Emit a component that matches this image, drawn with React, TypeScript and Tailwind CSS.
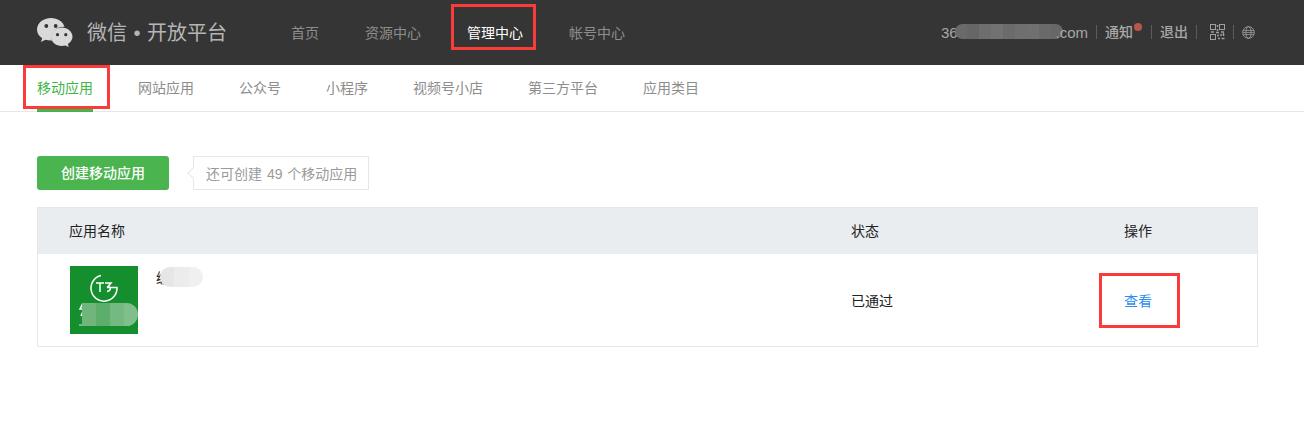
const navItems = [
  { label: '首页', active: false },
  { label: '资源中心', active: false },
  { label: '管理中心', active: true },
  { label: '帐号中心', active: false },
];

const subNavItems = ['移动应用', '网站应用', '公众号', '小程序', '视频号小店', '第三方平台', '应用类目'];

const emailBlur = ['#6a6a6a', '#666666', '#6e6e6e', '#727272', '#6b6b6b', '#6f6f6f', '#707070', '#6a6a6a', '#676767'];
const nameBlur = ['#e6e6e6', '#ececec', '#f0f0f0'];
const iconBlur = ['#6fb57c', '#5dad6b', '#74b981', '#80bf8c'];

function Logo() {
  return (
    <svg width="36" height="29" viewBox="0 0 36 29" className="block">
      <path d="M14 0C6.3 0 0 5.1 0 11.5c0 3.6 2 6.6 5.2 8.7L3.9 24l4.6-2.3c1.7.5 3.5.8 5.500.8h1c-.4-1-.6-2.200-.6-3.300 0-5.800 5.400-10.400 12.200-10.400h.9C26.200 3.500 20.600 0 14 0z" fill="#d9d9d9" />
      <path d="M35.500 18.800c0-5-5-9.200-10.700-9.200-6 0-10.800 4.200-10.800 9.200 0 5.100 4.800 9.200 10.800 9.200 1.300 0 2.500-.2 3.600-.5l3.300 1.500-.8-3c2.800-1.800 4.600-4.300 4.600-7.200z" fill="#d9d9d9" />
      <circle cx="9.300" cy="8" r="1.900" fill="#353535" />
      <circle cx="18.700" cy="8" r="1.900" fill="#353535" />
      <circle cx="20.500" cy="16.700" r="1.600" fill="#353535" />
      <circle cx="28.800" cy="16.700" r="1.600" fill="#353535" />
    </svg>
  );
}

function QrIcon() {
  return (
    <svg width="15" height="16" viewBox="0 0 15 16" fill="none" stroke="#a0a0a0" className="block">
      <rect x="0.500" y="0.500" width="5" height="5" />
      <rect x="9.500" y="0.500" width="5" height="5" />
      <rect x="0.500" y="10.500" width="5" height="5" />
      <path d="M7.500 1v2M7.500 5v2M1 8h3M6 8.500h3M11 8h3M13.500 9v3M8 10.500v2M10 11h2M8 14.500h2M11.500 14.500h3" strokeWidth="1.500" />
    </svg>
  );
}

function GlobeIcon() {
  return (
    <svg width="13" height="13" viewBox="0 0 13 13" fill="none" stroke="#969696" className="block">
      <circle cx="6.500" cy="6.500" r="5.800" />
      <ellipse cx="6.500" cy="6.500" rx="2.600" ry="5.800" />
      <path d="M1 4.500h11M1 8.500h11M.8 6.500h11.400" strokeWidth="0.800" />
    </svg>
  );
}

function AppIcon() {
  return (
    <div className="relative w-[68px] h-[68px] bg-[#158f2d] overflow-hidden">
      <svg width="68" height="68" viewBox="0 0 68 68" fill="none" stroke="#ffffff" className="block">
        <path d="M31 9.500A13 13 0 1 0 47 21.500H37" strokeWidth="1.500" />
        <path d="M26 17h8M30 17v9M35 17h6l-3 3.500c3 0 3.500 4.500-1 5" strokeWidth="1.500" />
        <path d="M9 59h51" stroke="#8fcb9a" strokeWidth="1.500" />
        <path d="M13 37l-3 6h4l-3 7" strokeWidth="1.500" />
      </svg>
      <div className="absolute left-[12px] top-[37px] flex h-[23px] overflow-hidden rounded-r-full rounded-l-lg">
        {iconBlur.map((color, i) => (
          <div key={i} className="w-[14px]" style={{ backgroundColor: color }} />
        ))}
      </div>
    </div>
  );
}

function Sep() {
  return <span className="block w-px h-[14px] bg-[#5c5c5c]" />;
}

export default function App() {
  return (
    <div className="w-[1304px] h-[436px] bg-white overflow-hidden font-['Liberation_Sans','Noto_Sans_CJK_SC',sans-serif] text-sm">
      <header className="h-[65px] bg-[#353535] flex items-center pl-[37px]">
        <Logo />
        <h1 className="ml-[14px] w-[204px] text-xl leading-[28px] text-[#b5b5b5] whitespace-nowrap">
          微信<span className="inline-block w-5 text-center">•</span>开放平台
        </h1>
        <nav className="flex gap-[46px] whitespace-nowrap">
          {navItems.map((item) => (
            <a key={item.label} className={`relative ${item.active ? 'text-white' : 'text-[#8d8d8d]'}`}>
              {item.label}
              {item.active && (
                <span className="absolute left-[-16px] top-[-19px] w-[85px] h-[46px] border-[3px] border-[#fb3a3a]" />
              )}
            </a>
          ))}
        </nav>
        <div className="ml-[316px] flex items-center whitespace-nowrap text-[#a8a8a8]">
          <span className="relative text-[15px] w-[147px]">
            36
            <span className="absolute left-[14px] top-[2px] flex h-[15px] overflow-hidden rounded-full">
              {emailBlur.map((color, i) => (
                <span key={i} className="w-[12px]" style={{ backgroundColor: color }} />
              ))}
            </span>
            <span className="absolute right-0 top-0">.com</span>
          </span>
          <span className="ml-[8px]"><Sep /></span>
          <span className="relative ml-[8px] font-medium">
            通知
            <span className="absolute left-[29px] top-[1px] w-[8px] h-[8px] rounded-full bg-[#b5574a]" />
          </span>
          <span className="ml-[18px]"><Sep /></span>
          <span className="ml-[8px] font-medium">退出</span>
          <span className="ml-[8px]"><Sep /></span>
          <span className="ml-[13px]"><QrIcon /></span>
          <span className="ml-[8px]"><Sep /></span>
          <span className="ml-[8px]"><GlobeIcon /></span>
        </div>
      </header>

      <nav className="h-[47px] border-b border-[#e7e7eb] flex gap-[45px] pl-[37px] whitespace-nowrap">
        {subNavItems.map((label, i) => (
          <a
            key={label}
            className={`relative h-[47px] leading-[46px] ${i === 0 ? 'text-[#44b549] border-b-[3px] border-[#44b549]' : 'text-[#8d8d8d]'}`}
          >
            {label}
            {i === 0 && (
              <span className="absolute left-[-14px] top-0 w-[87px] h-[44px] border-[3px] border-[#fb3a3a]" />
            )}
          </a>
        ))}
      </nav>

      <main className="px-[37px] pt-[44px] w-[1258px] box-content">
        <div className="flex items-center">
          <button className="w-[132px] h-[34px] rounded-[3px] bg-[#4ab54f] text-white font-medium">创建移动应用</button>
          <div className="relative ml-[24px] w-[176px] h-[34px] border border-[#e7e7eb] pl-[12px] leading-[34px] text-[#9a9a9a] [word-spacing:1px]">
            还可创建 49 个移动应用
            <span className="absolute left-[-5px] top-[12px] w-[8px] h-[8px] rotate-45 bg-white border-l border-b border-[#e7e7eb]" />
          </div>
        </div>

        <div className="mt-[17px] w-[1221px] h-[140px] border border-[#e7e7eb]">
          <div className="h-[46px] bg-[#e9edf0] grid grid-cols-[782px_273px_1fr] items-center pl-[31px] text-[#222222]">
            <span>应用名称</span>
            <span>状态</span>
            <span>操作</span>
          </div>
          <div className="h-[92px] grid grid-cols-[782px_273px_1fr] pl-[32px] items-center text-[#222222]">
            <div className="flex items-start">
              <AppIcon />
              <div className="relative ml-[18px] mt-[2px] leading-[20px]">
                编
                <span className="absolute left-[4px] top-[-1px] flex w-[43px] h-[20px] overflow-hidden rounded-full">
                  {nameBlur.map((color, i) => (
                    <span key={i} className="flex-1" style={{ backgroundColor: color }} />
                  ))}
                </span>
              </div>
            </div>
            <span className="-ml-px mt-[2px]">已通过</span>
            <span className="relative -ml-px mt-[2px] w-[28px] text-[#2d8cf0]">
              查看
              <span className="absolute left-[-25px] top-[-18px] w-[81px] h-[55px] border-[3px] border-[#fb3a3a]" />
            </span>
          </div>
        </div>
      </main>
    </div>
  );
}
